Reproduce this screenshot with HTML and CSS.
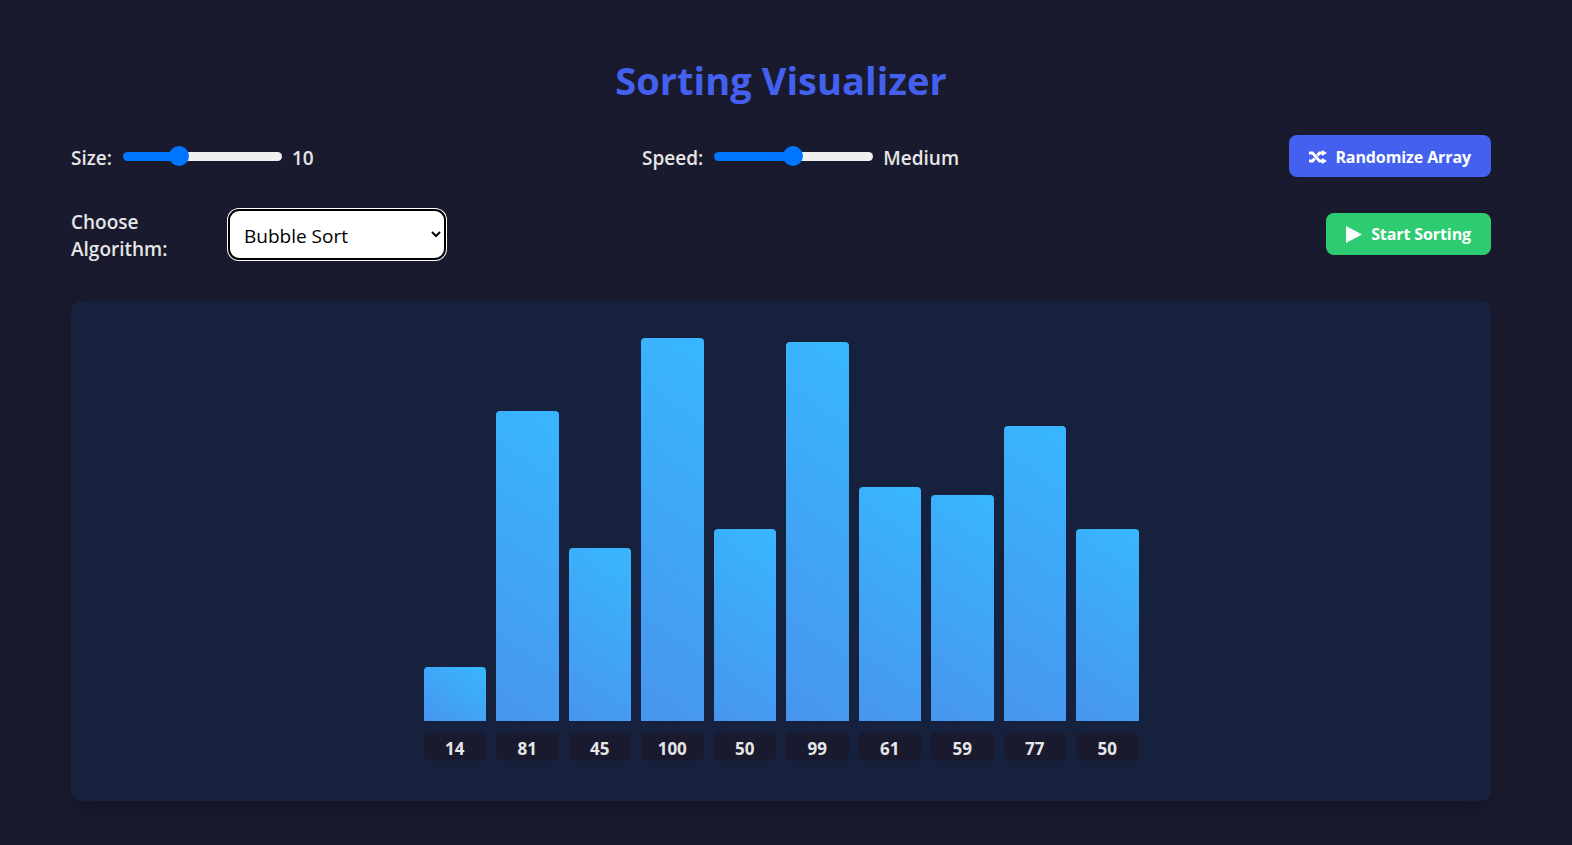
FILE: index.html
```html
<!DOCTYPE html>
<html lang="en">
<head>
<meta charset="utf-8">
<title>Sorting Visualizer</title>
<link rel="stylesheet" href="styles.css">
</head>
<body>
<main class="app">
  <h1 class="title">Sorting Visualizer</h1>
  <section class="row row-top">
    <div class="group">
      <label class="label" for="size">Size:</label>
      <input class="slider slider-size" id="size" type="range" min="5" max="20" value="10">
      <span class="label value">10</span>
    </div>
    <div class="group group-speed">
      <label class="label" for="speed">Speed:</label>
      <input class="slider slider-speed" id="speed" type="range" min="0" max="100" value="50">
      <span class="label value">Medium</span>
    </div>
    <button class="btn btn-blue" type="button">
      <svg class="icon-shuffle" viewBox="0 0 18 14" aria-hidden="true"><path fill="none" stroke="currentColor" stroke-width="2.8" d="M0 3h3.5l7 8h3M0 11h3.5l2.2-2.5M8.3 5.5 10.5 3h3"/><path fill="currentColor" d="M13 0l5 3-5 3zM13 8l5 3-5 3z"/></svg>
      Randomize Array
    </button>
  </section>
  <section class="row row-second">
    <div class="group">
      <label class="label label-algo" for="algo">Choose Algorithm:</label>
      <select class="select" id="algo">
        <option>Bubble Sort</option>
        <option>Selection Sort</option>
        <option>Insertion Sort</option>
        <option>Merge Sort</option>
        <option>Quick Sort</option>
      </select>
    </div>
    <button class="btn btn-green" type="button">
      <svg class="icon-play" viewBox="0 0 16 17" aria-hidden="true"><path fill="currentColor" d="M0 0 16 8.5 0 17z"/></svg>
      Start Sorting
    </button>
  </section>
  <section class="panel">
    <div class="chart">
      <div class="col"><div class="bar" style="height:54px"></div><span class="num">14</span></div>
      <div class="col"><div class="bar" style="height:310px"></div><span class="num">81</span></div>
      <div class="col"><div class="bar" style="height:173px"></div><span class="num">45</span></div>
      <div class="col"><div class="bar" style="height:383px"></div><span class="num">100</span></div>
      <div class="col"><div class="bar" style="height:192px"></div><span class="num">50</span></div>
      <div class="col"><div class="bar" style="height:379px"></div><span class="num">99</span></div>
      <div class="col"><div class="bar" style="height:234px"></div><span class="num">61</span></div>
      <div class="col"><div class="bar" style="height:226px"></div><span class="num">59</span></div>
      <div class="col"><div class="bar" style="height:295px"></div><span class="num">77</span></div>
      <div class="col"><div class="bar" style="height:192px"></div><span class="num">50</span></div>
    </div>
  </section>
</main>
</body>
</html>
```
FILE: styles.css
```css
* { box-sizing: border-box; }
html, body { height: 100%; }
body {
  margin: 0;
  background: #1a1a2e;
  color: #e6e6e6;
  font-family: "Open Sans", "Noto Sans", sans-serif;
  overflow: hidden;
}
.app {
  padding: 0 81px 0 71px;
  display: flex;
  flex-direction: column;
}
.title {
  margin: 0;
  padding-top: 54px;
  height: 112px;
  font-size: 38px;
  line-height: 52px;
  font-weight: 700;
  color: #4361ee;
  text-align: center;
  letter-spacing: 0.05px;
}
.row {
  display: flex;
  justify-content: space-between;
  align-items: center;
}
.row-top { height: 88px; }
.row-second { height: 67px; margin-bottom: 34px; }
.group { display: flex; align-items: center; }
.group-speed { margin-right: 2px; }
.label {
  font-size: 19px;
  line-height: 27px;
  font-weight: 600;
  color: #e6e6e6;
  padding-top: 4px;
}
.value { margin-left: 10.5px; }
.slider {
  appearance: none;
  -webkit-appearance: none;
  width: 159px;
  height: 9px;
  margin: 0 0 0 10.5px;
  border-radius: 5px;
  background: linear-gradient(#0075ff, #0075ff) 0 0 / 50% 100% no-repeat, #efefef;
  outline: none;
}
.slider-size { background-size: 35% 100%, auto; }
.slider::-webkit-slider-thumb {
  -webkit-appearance: none;
  width: 20px;
  height: 20px;
  border-radius: 50%;
  background: #0075ff;
  border: 0;
}
.label-algo { width: 110px; margin-right: 49px; }
.select {
  width: 214px;
  height: 47px;
  margin-top: 2px;
  padding: 3px 10px 0;
  font: 400 19px "Open Sans", "Noto Sans", sans-serif;
  color: #000;
  background: #fff;
  border: 0;
  border-radius: 9px;
  outline: 2px solid #000;
  box-shadow: 0 0 0 3px #fff;
}
.btn {
  display: flex;
  align-items: center;
  height: 42px;
  border: 0;
  border-radius: 8px;
  padding: 1px 20px 0;
  color: #fff;
  font: 700 16px "Open Sans", "Noto Sans", sans-serif;
  letter-spacing: -0.1px;
}
.btn-blue { background: #4361ee; gap: 8px; }
.btn-green { background: #2ecc71; gap: 9px; }
.icon-shuffle { width: 18px; height: 14px; }
.icon-play { width: 16px; height: 17px; }
.panel {
  height: 500px;
  background: #16213e;
  border-radius: 10px;
  box-shadow: 0 8px 20px rgba(0, 0, 0, 0.2);
  padding: 37px 0 40px;
}
.chart {
  display: flex;
  justify-content: center;
  align-items: flex-end;
  gap: 10px;
  height: 423px;
}
.col {
  display: flex;
  flex-direction: column;
  width: 62.5px;
}
.bar {
  border-radius: 4px 4px 0 0;
  background: linear-gradient(35deg, #4895ef, #38b6ff);
  margin-bottom: 12px;
}
.num {
  height: 28px;
  background: #1a1a2e;
  border-radius: 5px;
  font-size: 17px;
  line-height: 31px;
  font-weight: 700;
  text-align: center;
  color: #e6e6e6;
}
```
